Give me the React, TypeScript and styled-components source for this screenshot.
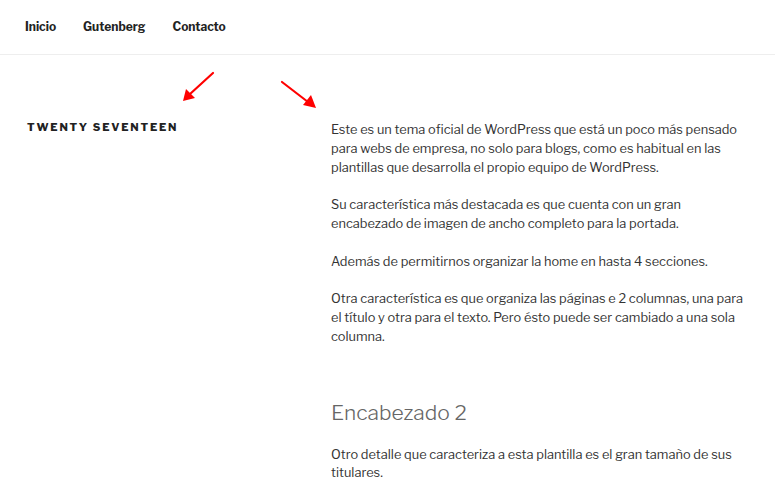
import React from "react";
import styled, { createGlobalStyle } from "styled-components";

const Global = createGlobalStyle`
  html, body { margin: 0; padding: 0; background: #fff; }
  body { font-family: "Libre Franklin", Lato, "Liberation Sans", sans-serif; color: #333; }
  * { box-sizing: border-box; }
`;

const Page = styled.div`
  width: 775px;
  height: 496px;
  overflow: hidden;
  position: relative;
`;

const NavBar = styled.nav`
  height: 55px;
  border-bottom: 1px solid #eeeeee;
  display: flex;
  align-items: center;
  padding: 0 0 2px 25px;
  gap: 27px;
`;

const NavLink = styled.a`
  font-size: 12px;
  font-weight: 700;
  color: #222;
  text-decoration: none;
`;

const Main = styled.main`
  display: grid;
  grid-template-columns: 331px 420px;
  padding-top: 66px;
`;

const SiteTitle = styled.h1`
  margin: 0 0 0 27px;
  font-size: 11px;
  font-weight: 800;
  letter-spacing: 1.8px;
  color: #222;
  text-transform: uppercase;
  line-height: 13px;
`;

const Content = styled.div`
  font-size: 12.8px;
  line-height: 18.8px;
`;

const Para = styled.p`
  margin: 0 0 18.8px;
`;

const Heading = styled.h2`
  margin: 53px 0 20px;
  font-size: 21px;
  font-weight: 300;
  color: #666;
  line-height: 26px;
`;

const Arrow = styled.svg`
  position: absolute;
  left: 0;
  top: 0;
  pointer-events: none;
`;

export default function App() {
  return (
    <Page>
      <Global />
      <NavBar>
        <NavLink href="#">Inicio</NavLink>
        <NavLink href="#">Gutenberg</NavLink>
        <NavLink href="#">Contacto</NavLink>
      </NavBar>
      <Main>
        <SiteTitle>Twenty Seventeen</SiteTitle>
        <Content>
          <Para>
            Este es un tema oficial de WordPress que está un poco más pensado para webs de empresa, no solo para blogs, como es habitual en las plantillas que desarrolla el propio equipo de WordPress.
          </Para>
          <Para>
            Su característica más destacada es que cuenta con un gran encabezado de imagen de ancho completo para la portada.
          </Para>
          <Para>Además de permitirnos organizar la home en hasta 4 secciones.</Para>
          <Para>
            Otra característica es que organiza las páginas e 2 columnas, una para el título y otra para el texto. Pero ésto puede ser cambiado a una sola columna.
          </Para>
          <Heading>Encabezado 2</Heading>
          <Para>
            Otro detalle que caracteriza a esta plantilla es el gran tamaño de sus titulares.
          </Para>
        </Content>
      </Main>
      <Arrow width="775" height="140" viewBox="0 0 775 140">
        <g stroke="#ff0000" strokeWidth="2.2" strokeLinecap="round">
          <line x1="213" y1="73" x2="190" y2="94" />
          <line x1="282" y1="82" x2="308" y2="102" />
        </g>
        <g fill="#ff0000">
          <polygon points="183,101 186,89 195,98" />
          <polygon points="316,108 303,105 311,95" />
        </g>
      </Arrow>
    </Page>
  );
}
